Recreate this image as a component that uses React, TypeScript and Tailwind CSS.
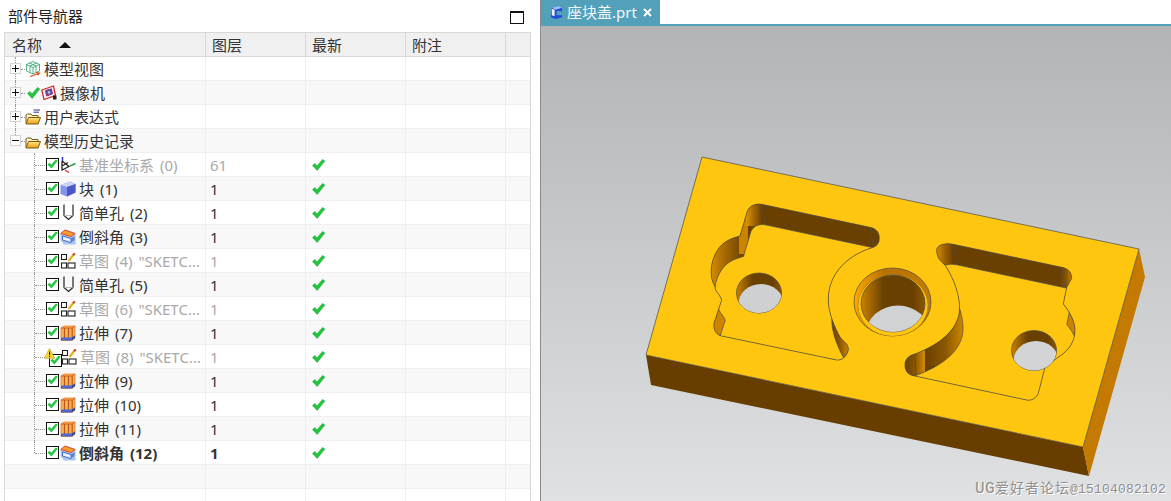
import type { ReactNode } from 'react';

const leftRim =
  'M761.7 204.3 L870 227.3 C876 228.6 879.3 232 879.3 238.3 C879.3 243 877 246 873.3 247.3 C850 254 828 272 828.3 300 C828.3 313 835 328 840 337 C843 342 848.3 343 848.3 349 C848.3 354 843 361 836.7 360 L721.7 336 C716 335 713 329 714 323.3 L721.7 300 C720 294 715 292 715 286.7 C708 275 711 258 720 246.7 C726 240 733 238 740 236 L746.7 213.3 C748 207 754 203 761.7 204.3 Z';

const rightRim =
  'M953.3 244.3 L1061.7 267.3 C1068 268.6 1071.7 272 1071.7 278.3 L1066.7 287.3 L1063.3 304 C1070 312 1075 322 1075 330 C1075 345 1065 353 1056.7 358.3 L1045 367.3 L1038.3 393.3 C1036 398 1032 401 1026.7 400 L915 376 C908 375 905 371 905 365 C905 359 909 355.5 915 354 C933 347 952 336 958 318 C963 303 955 280 945 265 C940 261 936.7 257 936.7 250 C937 245 945 242.6 953.3 244.3 Z';

const Check = ({ className = '' }: { className?: string }) => (
  <svg viewBox="0 0 13 12" className={`w-[13px] h-[12px] ${className}`}>
    <path d="M0.5 6.5 L3 4.5 L5 7 L10.5 0.5 L12.8 2 L5.2 11.5 Z" fill="#1fc83e" stroke="#109a2c" strokeWidth="0.5" />
  </svg>
);

const CheckBox = () => (
  <span className="relative block w-[13px] h-[13px] border-[1.5px] border-[#111] bg-white shrink-0">
    <svg viewBox="0 0 13 12" className="absolute left-0 top-0 w-[11px] h-[10px]">
      <path d="M0.5 6.5 L3 4.5 L5 7 L10.5 0.5 L12.8 2 L5.2 11.5 Z" fill="#1fc83e" />
    </svg>
  </span>
);

const Warning = () => (
  <svg viewBox="0 0 11 11" className="w-[11px] h-[11px]">
    <path d="M5.5 0.5 L10.7 10.3 L0.3 10.3 Z" fill="#f8d840" stroke="#c9a020" strokeWidth="0.7" />
    <rect x="5" y="3.5" width="1.1" height="3.8" fill="#222" />
    <rect x="5" y="8" width="1.1" height="1.2" fill="#222" />
  </svg>
);

const ViewIcon = () => (
  <svg viewBox="0 0 16 16" className="w-4 h-4">
    <path d="M8 0.5 L14.5 3.5 L14.5 10 L8 13 L1.5 10 L1.5 3.5 Z M1.5 3.5 L8 6.5 L14.5 3.5 M8 6.5 L8 13 M4.5 2 L11 5 L11 11.5 M11.5 2 L5 5 L5 11.5" fill="none" stroke="#2aa06a" strokeWidth="0.8" />
    <path d="M5 15.5 L12 13" stroke="#e8502a" strokeWidth="1.3" />
    <path d="M11 11 L15.5 11.5 L13 15 Z" fill="#e8502a" />
  </svg>
);

const CameraIcon = () => (
  <svg viewBox="0 0 16 16" className="w-[16px] h-[16px]">
    <path d="M0.8 5 L12.5 1 L14.5 10.5 L3 14.5 Z" fill="#f5f5ff" stroke="#d82a20" strokeWidth="1.3" />
    <path d="M4.5 5.5 L10.5 3.8 L11.5 9 L5.5 11 Z" fill="#3858c0" stroke="#a02a60" strokeWidth="0.9" />
    <circle cx="8" cy="7.4" r="1.3" fill="#e8b0c0" />
    <path d="M12 10.5 L15.5 10.5 L15.5 14.5 L12 14.5 Z" fill="#222" />
  </svg>
);

const Folder = ({ lines = false }: { lines?: boolean }) => (
  <svg viewBox="0 0 16 16" className="w-4 h-4">
    <defs>
      <linearGradient id="fold" x1="0" y1="0" x2="0" y2="1">
        <stop offset="0" stopColor="#ffe88a" />
        <stop offset="1" stopColor="#eb9c0c" />
      </linearGradient>
    </defs>
    {lines && <path d="M8.5 1 H15 M8.5 3.2 H14" stroke="#3a2a9a" strokeWidth="1" />}
    <path d="M1 14.5 L1 6 L2.5 5 L6 5 L7 6.5 L13 6.5 L13 8.5" fill="#fff3c0" stroke="#7a5c18" strokeWidth="1" />
    <path d="M1 15 L3.5 8.5 L15.5 8.5 L13 15 Z" fill="url(#fold)" stroke="#7a5c18" strokeWidth="1" />
  </svg>
);

const DatumIcon = () => (
  <svg viewBox="0 0 16 16" className="w-4 h-4">
    <path d="M2.5 0 L2.5 4" stroke="#2a2ad0" strokeWidth="1.4" />
    <path d="M2 4 L2 13 L9 9.5 L2 4 M2 9 L8 5.5" fill="none" stroke="#222" strokeWidth="1.3" />
    <path d="M10 9 L15.5 6.5" stroke="#2aa040" strokeWidth="1.5" />
    <path d="M5 13 L9 15.5" stroke="#d83030" strokeWidth="1.3" />
  </svg>
);

const BlockIcon = () => (
  <svg viewBox="0 0 16 16" className="w-4 h-4">
    <path d="M0.5 4 L10 0.5 L15.5 3 L15.5 11.5 L7 15.5 L0.5 13 Z" fill="#8492ea" />
    <path d="M0.5 4 L10 0.5 L15.5 3 L7 6 Z" fill="#cdd4fa" />
    <path d="M7 6 L15.5 3 L15.5 11.5 L7 15.5 Z" fill="#4a58c8" />
  </svg>
);

const HoleIcon = () => (
  <svg viewBox="0 0 11 17" className="w-[11px] h-[17px]">
    <path d="M1 0.5 L1 11.5 L5.5 15.5 L10 11.5 L10 0.5" fill="none" stroke="#222" strokeWidth="1.2" />
    <path d="M1 11.5 L10 11.5" stroke="#aaa" strokeWidth="0.8" />
  </svg>
);

const ChamferIcon = () => (
  <svg viewBox="0 0 16 16" className="w-4 h-4">
    <path d="M0.5 4.5 L5 0.5 L15.5 4 L15.5 15.5 L4 15.5 L0.5 11 Z" fill="#a8c4f0" />
    <path d="M0.8 4.5 L5 1 L15 4.5 L11 7.5 Z" fill="#f2a030" stroke="#e04020" strokeWidth="0.9" />
    <path d="M2.5 7 L11 9.5 L11 13.5 L2.5 11 Z" fill="#eef2fc" stroke="#3a60c0" strokeWidth="0.9" />
    <path d="M11 9.5 L14.5 7 L14.5 11 L11 13.5 Z" fill="#5a80d8" />
  </svg>
);

const SketchIcon = () => (
  <svg viewBox="0 0 16 16" className="w-4 h-4">
    <rect x="1.5" y="1.5" width="5" height="5" fill="#fff" stroke="#222" strokeWidth="1.1" />
    <rect x="1.5" y="10" width="5" height="5" fill="#fff" stroke="#222" strokeWidth="1.1" />
    <rect x="8" y="10" width="7" height="5" fill="#fff" stroke="#222" strokeWidth="1.1" />
    <path d="M8.5 8 L13.5 1.8" stroke="#e8b020" strokeWidth="2.2" />
    <path d="M13 2.2 L14.8 0.3" stroke="#d83030" strokeWidth="2" />
  </svg>
);

const ExtrudeIcon = () => (
  <svg viewBox="0 0 16 16" className="w-4 h-4">
    <path d="M1 3 L4 1 L15 1 L15 13 L12 15.5 L1 15.5 Z" fill="#f8b050" stroke="#e08030" strokeWidth="0.8" />
    <path d="M1 3 L12 3 L15 1" fill="none" stroke="#d85020" strokeWidth="0.9" />
    <path d="M4.5 3 L4.5 14 M8.5 3 L8.5 14 M12.2 3 L12.2 14" stroke="#b85a18" strokeWidth="1.2" />
    <path d="M1 12.5 L12 12.5 L12 15.5 L1 15.5 Z" fill="#4a68d0" />
    <path d="M12 12.5 L15 10.5 L15 13 L12 15.5 Z" fill="#2f48a8" />
  </svg>
);

const Expander = ({ open = false }: { open?: boolean }) => (
  <span className="relative z-10 flex items-center justify-center w-[11px] h-[11px] border border-[#d4d4d4] bg-white shrink-0">
    <span className="absolute w-[7px] h-px bg-[#111]" />
    {!open && <span className="absolute w-px h-[7px] bg-[#111]" />}
  </span>
);

type Feature = { name: string; layer: string; icon: ReactNode; dim?: boolean; warn?: boolean; bold?: boolean };

const features: Feature[] = [
  { name: '基准坐标系 (0)', layer: '61', icon: <DatumIcon />, dim: true },
  { name: '块 (1)', layer: '1', icon: <BlockIcon /> },
  { name: '简单孔 (2)', layer: '1', icon: <HoleIcon /> },
  { name: '倒斜角 (3)', layer: '1', icon: <ChamferIcon /> },
  { name: '草图 (4) "SKETC...', layer: '1', icon: <SketchIcon />, dim: true },
  { name: '简单孔 (5)', layer: '1', icon: <HoleIcon /> },
  { name: '草图 (6) "SKETC...', layer: '1', icon: <SketchIcon />, dim: true },
  { name: '拉伸 (7)', layer: '1', icon: <ExtrudeIcon /> },
  { name: '草图 (8) "SKETC...', layer: '1', icon: <SketchIcon />, dim: true, warn: true },
  { name: '拉伸 (9)', layer: '1', icon: <ExtrudeIcon /> },
  { name: '拉伸 (10)', layer: '1', icon: <ExtrudeIcon /> },
  { name: '拉伸 (11)', layer: '1', icon: <ExtrudeIcon /> },
  { name: '倒斜角 (12)', layer: '1', icon: <ChamferIcon />, bold: true },
];

const Row = ({ shaded, children, layer, latest, dim, bold }: { shaded: boolean; children?: ReactNode; layer?: string; latest?: boolean; dim?: boolean; bold?: boolean }) => (
  <div className={`grid grid-cols-[201px_100px_100px_100px_24px] h-6 border-b border-[#efefef] ${shaded ? 'bg-[#f8f8f8]' : 'bg-white'}`}>
    <div className="relative flex items-center border-r border-[#efefef] min-w-0 whitespace-nowrap">{children}</div>
    <div className={`flex items-center pl-[4px] pt-px border-r border-[#efefef] ${dim ? 'text-[#a9a9a9]' : ''} ${bold ? 'font-bold' : ''}`}>{layer}</div>
    <div className="flex items-center pl-[6px] border-r border-[#efefef]">{latest && <Check />}</div>
    <div className="border-r border-[#efefef]" />
    <div />
  </div>
);

const TopRow = ({ shaded, open, last, children }: { shaded: boolean; open?: boolean; last?: boolean; children: ReactNode }) => (
  <Row shaded={shaded}>
    <span className={`absolute left-[10px] top-0 w-0 border-l border-dotted border-[#999] ${last ? 'h-3' : 'h-6'}`} />
    <span className="absolute left-[16px] top-3 w-[4px] border-t border-dotted border-[#999]" />
    <span className="ml-[5px]"><Expander open={open} /></span>
    {children}
  </Row>
);

const FeatureRow = ({ f, shaded, last }: { f: Feature; shaded: boolean; last: boolean }) => (
  <Row shaded={shaded} layer={f.layer} latest dim={f.dim} bold={f.bold}>
    <span className={`absolute left-[29px] top-0 w-0 border-l border-dotted border-[#999] ${last ? 'h-3' : 'h-6'}`} />
    <span className="absolute left-[30px] top-3 w-[10px] border-t border-dotted border-[#999]" />
    {f.warn ? (
      <span className="relative ml-[44px] w-[12px] h-[12px] mt-[7px] shrink-0 mr-[-1px]">
        <CheckBox />
        <span className="absolute left-[-5px] top-[-6px]"><Warning /></span>
      </span>
    ) : (
      <span className="ml-[41px]"><CheckBox /></span>
    )}
    <span className="ml-px w-4 flex justify-center shrink-0">{f.icon}</span>
    <span className={`ml-[3px] pt-px [word-spacing:2px] ${f.dim ? 'text-[#a9a9a9]' : ''} ${f.bold ? 'font-bold' : ''}`}>{f.name}</span>
  </Row>
);

const ModelDrawing = () => (
  <svg viewBox="541 26 630 475" className="block w-[630px] h-[475px]">
    <defs>
      <clipPath id="leftClip"><path d={leftRim} /></clipPath>
      <clipPath id="rightClip"><path d={rightRim} /></clipPath>
      <clipPath id="holeA"><ellipse cx="759" cy="293" rx="22.5" ry="20" /></clipPath>
      <clipPath id="holeB"><ellipse cx="1034" cy="350.5" rx="22.5" ry="20" /></clipPath>
      <clipPath id="holeC"><ellipse cx="893" cy="303.5" rx="32" ry="28.5" /></clipPath>
      <clipPath id="outerC"><ellipse cx="892.5" cy="302" rx="38.5" ry="34" /></clipPath>
      <linearGradient id="wallL" x1="0" x2="1" y1="0" y2="0">
        <stop offset="0" stopColor="#e09400" />
        <stop offset="0.45" stopColor="#a86a00" />
        <stop offset="1" stopColor="#6a4000" />
      </linearGradient>
      <linearGradient id="wallR" x1="0" x2="1" y1="0" y2="0">
        <stop offset="0" stopColor="#6a4000" />
        <stop offset="0.5" stopColor="#8a5600" />
        <stop offset="1" stopColor="#d48c00" />
      </linearGradient>
      <linearGradient id="holeWall" x1="0" x2="1" y1="0" y2="0">
        <stop offset="0" stopColor="#c98200" />
        <stop offset="0.35" stopColor="#6a4000" />
        <stop offset="0.8" stopColor="#6a4000" />
        <stop offset="1" stopColor="#8a5600" />
      </linearGradient>
      <linearGradient id="bore" x1="0" x2="1" y1="0" y2="0">
        <stop offset="0" stopColor="#ffa800" />
        <stop offset="0.4" stopColor="#b87000" />
        <stop offset="1" stopColor="#c47c00" />
      </linearGradient>
    </defs>

    {/* plate */}
    <path d="M646 355 L1083 447 L1089 476 L651 385 Z" fill="#683e00" />
    <path d="M1083 447 L1139 249 L1145 277 L1089 476 Z" fill="#c47a00" />
    <path d="M702 157 L1139 249 L1083 447 L646 355 Z" fill="#ffc60f" stroke="#4a4a4a" strokeWidth="0.7" />

    {/* left pocket */}
    <path d={leftRim} fill="#6a4000" />
    <g clipPath="url(#leftClip)">
      <rect x="708" y="230" width="36" height="100" fill="url(#wallL)" />
      <rect x="739" y="212" width="9" height="42" fill="#cc8400" />
      <rect x="746" y="200" width="16" height="26" fill="url(#wallL)" />
      <rect x="713" y="300" width="12" height="38" fill="#cc8400" />
      <rect x="830" y="318" width="20" height="44" fill="url(#wallR)" />
      <path d={leftRim} transform="translate(3.5 20.5)" fill="#ffc60f" stroke="#4a4a4a" strokeWidth="0.7" />
    </g>
    <path d={leftRim} fill="none" stroke="#4a4a4a" strokeWidth="0.7" />
    <path d="M761.7 204.3 L765 224 M870 227.3 L873.5 247" stroke="#4a4a5a" strokeWidth="0.7" />

    {/* right pocket */}
    <path d={rightRim} fill="#6a4000" />
    <g clipPath="url(#rightClip)">
      <rect x="905" y="345" width="20" height="34" fill="url(#wallR)" />
      <rect x="925" y="282" width="40" height="84" fill="url(#wallR)" />
      <rect x="935" y="243" width="18" height="24" fill="url(#wallL)" />
      <rect x="1060" y="266" width="13" height="22" fill="url(#wallR)" />
      <rect x="1062" y="302" width="15" height="40" fill="#cc8400" />
      <path d={rightRim} transform="translate(3.5 20.5)" fill="#ffc60f" stroke="#4a4a4a" strokeWidth="0.7" />
    </g>
    <path d={rightRim} fill="none" stroke="#4a4a4a" strokeWidth="0.7" />
    <path d="M953.3 244.3 L956.7 264 M1061.7 267.3 L1065 287 M915 354 L916 376" stroke="#4a4a5a" strokeWidth="0.7" />

    {/* through holes */}
    <ellipse cx="759" cy="293" rx="22.5" ry="20" fill="url(#holeWall)" stroke="#4a4a4a" strokeWidth="0.7" />
    <g clipPath="url(#holeA)"><ellipse cx="761" cy="304" rx="22.5" ry="20" fill="#ced0d2" /></g>
    <ellipse cx="1034" cy="350.5" rx="22.5" ry="20" fill="url(#holeWall)" stroke="#4a4a4a" strokeWidth="0.7" />
    <g clipPath="url(#holeB)"><ellipse cx="1036" cy="361" rx="22.5" ry="20" fill="#d2d4d5" /></g>

    {/* counterbored centre hole */}
    <ellipse cx="892.5" cy="302" rx="38.5" ry="34" fill="url(#bore)" stroke="#4a4a4a" strokeWidth="0.7" />
    <g clipPath="url(#outerC)"><ellipse cx="893" cy="305.5" rx="35" ry="31" fill="#ffc60f" stroke="#a87000" strokeWidth="0.6" /></g>
    <ellipse cx="893" cy="303.5" rx="32" ry="28.5" fill="url(#holeWall)" stroke="#4a4a4a" strokeWidth="0.7" />
    <g clipPath="url(#holeC)"><ellipse cx="898" cy="334" rx="32" ry="28.5" fill="#d0d2d3" /></g>
  </svg>
);

export default function App() {
  return (
    <div className="flex w-[1171px] h-[501px] overflow-hidden bg-white text-[15px] leading-none text-[#333] font-['Noto_Sans','Noto_Sans_CJK_SC',sans-serif]">
      {/* navigator panel */}
      <div className="w-[540px] shrink-0 flex flex-col">
        <div className="relative flex items-center h-[32px] pl-2">
          <span className="text-[#222]">部件导航器</span>
          <span className="absolute left-[510px] top-[11px] w-[14px] h-[13px] border border-[#111] border-t-2" />
        </div>
        <div className="ml-1 w-[527px] flex-1 border-x border-t border-[#d9d9d9] overflow-hidden">
          <div className="grid grid-cols-[201px_100px_100px_100px_24px] h-6 bg-[#f0f0f0] border-b border-[#d9d9d9]">
            <div className="flex items-center pl-[7px] pt-px border-r border-[#d9d9d9]">
              名称
              <svg viewBox="0 0 12 6" className="w-[12px] h-[6px] ml-[17px]"><path d="M6 0 L12 6 L0 6 Z" fill="#111" /></svg>
            </div>
            <div className="flex items-center pl-[6px] pt-px border-r border-[#d9d9d9]">图层</div>
            <div className="flex items-center pl-[6px] pt-px border-r border-[#d9d9d9]">最新</div>
            <div className="flex items-center pl-[6px] pt-px border-r border-[#d9d9d9]">附注</div>
            <div />
          </div>

          <TopRow shaded={false}>
            <span className="ml-[4px]"><ViewIcon /></span>
            <span className="ml-[3px] pt-px">模型视图</span>
          </TopRow>
          <TopRow shaded>
            <Check className="ml-[6px] shrink-0" />
            <span className="ml-px"><CameraIcon /></span>
            <span className="ml-[3px] pt-px">摄像机</span>
          </TopRow>
          <TopRow shaded={false}>
            <span className="ml-[4px]"><Folder lines /></span>
            <span className="ml-[3px] pt-px">用户表达式</span>
          </TopRow>
          <TopRow shaded open last>
            <span className="ml-[4px]"><Folder /></span>
            <span className="ml-[3px] pt-px">模型历史记录</span>
          </TopRow>

          {features.map((f, i) => (
            <FeatureRow key={f.name} f={f} shaded={i % 2 === 1} last={i === features.length - 1} />
          ))}

          <Row shaded />
          <Row shaded={false} />
        </div>
      </div>

      {/* graphics window */}
      <div className="relative flex-1 flex flex-col border-l border-[#8a8a8a]">
        <div className="flex h-[26px] border-b-2 border-[#52a0ba] shrink-0">
          <div className="flex items-center w-[119px] h-6 bg-[#52a0ba] text-[#f4f8fa]">
            <svg viewBox="0 0 16 16" className="ml-[8px] w-[15px] h-[15px]">
              <path d="M3 3 L10 1 L14 3 L14 7 L10 6 L8 7 L8 11 L14 11 L14 13 L7 15 L2 13 Z" fill="#2448d8" />
              <path d="M3 3 L10 1 L14 3 L7 5 Z" fill="#9cc0ff" />
              <path d="M3 4 L6 5 L6 12 L3 11 Z" fill="#e8f0ff" />
            </svg>
            <span className="ml-[3px]">座块盖.prt</span>
            <svg viewBox="0 0 9 9" className="ml-[6px] w-[9px] h-[9px]"><path d="M1 1 L8 8 M8 1 L1 8" stroke="#fff" strokeWidth="2" /></svg>
          </div>
        </div>
        <div className="flex-1 bg-linear-to-b from-[#b3b4b6] to-[#e0e1e2]">
          <ModelDrawing />
        </div>
        <span className="absolute left-[434px] top-[481px] whitespace-nowrap text-[#8f8f8f] [text-shadow:1px_1px_0_#fff] font-['Liberation_Mono','Noto_Sans_CJK_SC',monospace]">
          <span className="text-[16px] tracking-[0.4px]">UG</span>
          <span className="text-[14px] tracking-[1px]">爱好者论坛</span>
          <span className="text-[13px] tracking-[0.2px]">@15104082102</span>
        </span>
      </div>
    </div>
  );
}
